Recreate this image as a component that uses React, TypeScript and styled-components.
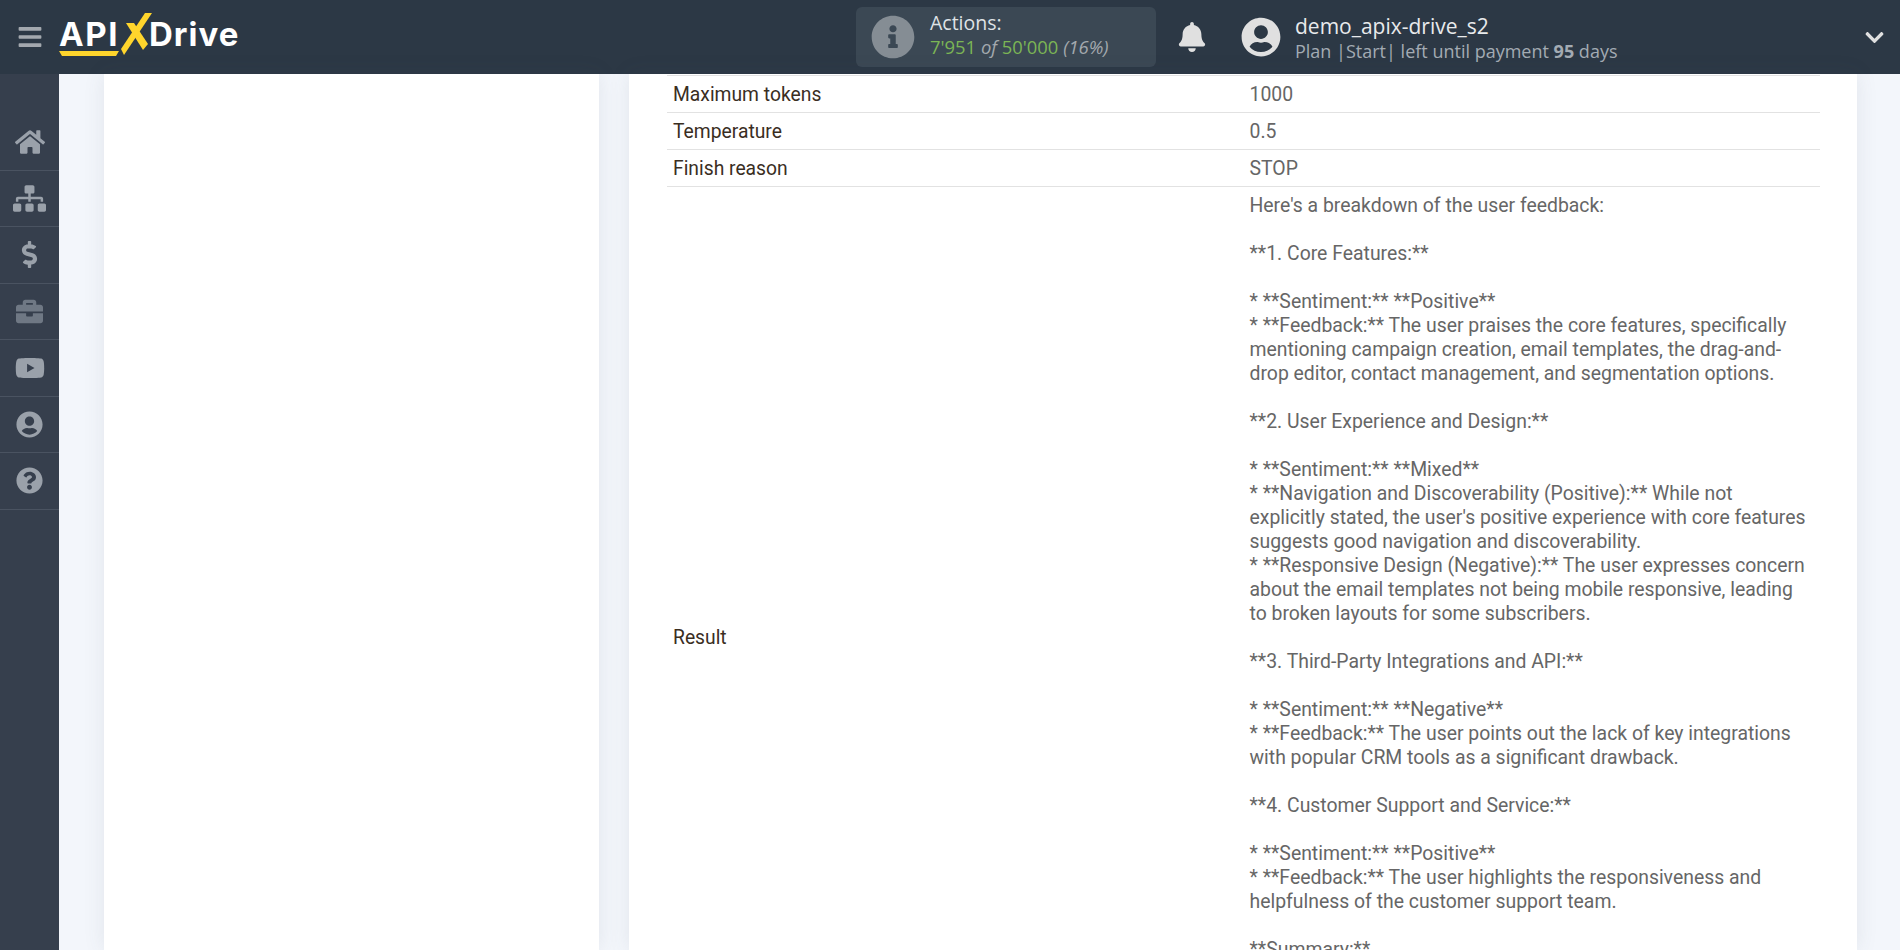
import React from "react";
import styled, { createGlobalStyle } from "styled-components";
import {
  FaBars,
  FaBell,
  FaBriefcase,
  FaChevronDown,
  FaDollarSign,
  FaHome,
  FaInfoCircle,
  FaQuestionCircle,
  FaSitemap,
  FaUserCircle,
  FaYoutube,
} from "react-icons/fa";

const GlobalStyle = createGlobalStyle`
  html, body {
    margin: 0;
    padding: 0;
    height: 950px;
    overflow: hidden;
    background: #f3f6fb;
    font-family: Roboto, "Liberation Sans", sans-serif;
  }
  * { box-sizing: border-box; }
`;

const resultText = `Here's a breakdown of the user feedback:

**1. Core Features:**

* **Sentiment:** **Positive**
* **Feedback:** The user praises the core features, specifically mentioning campaign creation, email templates, the drag-and-drop editor, contact management, and segmentation options.

**2. User Experience and Design:**

* **Sentiment:** **Mixed**
* **Navigation and Discoverability (Positive):** While not explicitly stated, the user's positive experience with core features suggests good navigation and discoverability.
* **Responsive Design (Negative):** The user expresses concern about the email templates not being mobile responsive, leading to broken layouts for some subscribers.

**3. Third-Party Integrations and API:**

* **Sentiment:** **Negative**
* **Feedback:** The user points out the lack of key integrations with popular CRM tools as a significant drawback.

**4. Customer Support and Service:**

* **Sentiment:** **Positive**
* **Feedback:** The user highlights the responsiveness and helpfulness of the customer support team.

**Summary:**





`;

const params = [
  { name: "Maximum tokens", value: "1000" },
  { name: "Temperature", value: "0.5" },
  { name: "Finish reason", value: "STOP" },
];

const navItems = [
  { icon: <FaHome />, size: 30, dim: false },
  { icon: <FaSitemap />, size: 33, dim: false },
  { icon: <FaDollarSign />, size: 27, dim: false },
  { icon: <FaBriefcase />, size: 27, dim: true },
  { icon: <FaYoutube />, size: 30, dim: false },
  { icon: <FaUserCircle />, size: 27, dim: false },
  { icon: <FaQuestionCircle />, size: 27, dim: false },
];

const App = () => {
  return (
    <Page>
      <GlobalStyle />
      <Header>
        <BurgerButton>
          <FaBars />
        </BurgerButton>
        <Logo>
          <LogoApi>API</LogoApi>
          <LogoX viewBox="0 0 31 42">
            <path d="M5 10h8l14 21-5 6z" fill="#ffd52c" />
            <path d="M24 0h7L3 42 0 36z" fill="#ffd52c" />
          </LogoX>
          <LogoDrive>Drive</LogoDrive>
          <LogoUnderline viewBox="0 0 60 5">
            <path d="M0 0h60l-3 5H3z" fill="#ffd52c" />
          </LogoUnderline>
        </Logo>
        <ActionsBox>
          <InfoIcon>
            <FaInfoCircle />
          </InfoIcon>
          <ActionsText>
            <ActionsTitle>Actions:</ActionsTitle>
            <ActionsCount>
              <Green>7'951</Green> <Muted>of</Muted> <Green>50'000</Green> <Muted>(16%)</Muted>
            </ActionsCount>
          </ActionsText>
        </ActionsBox>
        <BellIcon>
          <FaBell />
        </BellIcon>
        <Avatar>
          <FaUserCircle />
        </Avatar>
        <UserInfo>
          <UserName>demo_apix-drive_s2</UserName>
          <PlanLine>
            Plan |Start| left until payment <b>95</b> days
          </PlanLine>
        </UserInfo>
        <ChevronIcon>
          <FaChevronDown />
        </ChevronIcon>
      </Header>
      <Body>
        <Sidebar>
          {navItems.map((item, i) => (
            <NavItem key={i} $dim={item.dim} $size={item.size}>
              {item.icon}
            </NavItem>
          ))}
        </Sidebar>
        <Content>
          <LeftCard />
          <MainCard>
            <Table>
              {params.map((p) => (
                <Row key={p.name}>
                  <Label>{p.name}</Label>
                  <Value>{p.value}</Value>
                </Row>
              ))}
              <Row>
                <Label>Result</Label>
                <Value>{resultText}</Value>
              </Row>
            </Table>
          </MainCard>
        </Content>
      </Body>
    </Page>
  );
};

export default App;

const Page = styled.div`
  width: 1900px;
  height: 950px;
  display: flex;
  flex-direction: column;
  overflow: hidden;
`;

const Header = styled.header`
  height: 74px;
  flex: none;
  display: flex;
  align-items: center;
  background: #2c3845;
  font-family: "Open Sans", sans-serif;
`;

const BurgerButton = styled.div`
  width: 59px;
  flex: none;
  display: flex;
  justify-content: center;
  color: #a3a8ae;
  font-size: 26px;
  line-height: 0;
`;

const Logo = styled.div`
  position: relative;
  width: 181px;
  height: 74px;
  flex: none;
  display: flex;
  align-items: center;
  color: #fff;
`;

const LogoApi = styled.span`
  width: 60px;
  margin: -5px 2px 0 0;
  font-family: Inter, sans-serif;
  font-size: 33px;
  font-weight: 700;
  letter-spacing: 1.6px;
  line-height: 1;
`;

const LogoDrive = styled.span`
  margin: -5px 0 0 -3px;
  font-family: Inter, sans-serif;
  font-size: 33px;
  font-weight: 700;
  letter-spacing: 1px;
  line-height: 1;
`;

const LogoX = styled.svg`
  width: 31px;
  height: 42px;
  flex: none;
  margin-bottom: 6px;
`;

const LogoUnderline = styled.svg`
  position: absolute;
  left: 0;
  top: 51px;
  width: 60px;
  height: 5px;
`;

const ActionsBox = styled.div`
  width: 300px;
  height: 60px;
  flex: none;
  margin-left: 616px;
  padding-left: 15px;
  display: flex;
  align-items: center;
  gap: 15px;
  background: #3b4854;
  border-radius: 6px;
`;

const InfoIcon = styled.div`
  color: #858d94;
  font-size: 44px;
  line-height: 0;
`;

const ActionsText = styled.div`
  display: flex;
  flex-direction: column;
  margin-bottom: 6px;
`;

const ActionsTitle = styled.span`
  color: #dfe3e6;
  font-size: 19.5px;
  line-height: 25px;
`;

const ActionsCount = styled.span`
  font-size: 18.4px;
  line-height: 24px;
`;

const Green = styled.span`
  color: #7bb555;
`;

const Muted = styled.i`
  color: #a3a9ae;
`;

const BellIcon = styled.div`
  margin-left: 21px;
  color: #e0e0e0;
  font-size: 30px;
  line-height: 0;
`;

const Avatar = styled.div`
  margin-left: 34px;
  color: #e0e0e0;
  font-size: 40px;
  line-height: 0;
`;

const UserInfo = styled.div`
  margin: 2px 0 0 14px;
  display: flex;
  flex-direction: column;
`;

const UserName = styled.span`
  color: #e8eaec;
  font-size: 21px;
  line-height: 26px;
`;

const PlanLine = styled.span`
  color: #a3abb3;
  font-size: 18px;
  line-height: 24px;
`;

const ChevronIcon = styled.div`
  margin-left: auto;
  margin-right: 15px;
  color: #e0e0e0;
  font-size: 21px;
  line-height: 0;
`;

const Body = styled.div`
  flex: 1;
  min-height: 0;
  display: flex;
`;

const Sidebar = styled.nav`
  width: 59px;
  flex: none;
  padding-top: 40px;
  background: #363f4d;
`;

const NavItem = styled.div<{ $dim: boolean; $size: number }>`
  height: 56.5px;
  display: flex;
  align-items: center;
  justify-content: center;
  color: ${(p) => (p.$dim ? "#6f7884" : "#9aa1aa")};
  font-size: ${(p) => p.$size}px;
  border-bottom: 1px solid #4a5361;
`;

const Content = styled.main`
  flex: 1;
  min-width: 0;
  padding: 0 43px 0 45px;
  display: flex;
  gap: 30px;
`;

const LeftCard = styled.div`
  width: 495px;
  flex: none;
  background: #fff;
  box-shadow: 0 0 20px rgba(70, 80, 100, 0.1);
`;

const MainCard = styled.section`
  flex: 1;
  padding: 1px 37px 0 38px;
  background: #fff;
  box-shadow: 0 0 20px rgba(70, 80, 100, 0.1);
`;

const Table = styled.div`
  display: flex;
  flex-direction: column;
  border-top: 1px solid #e2e2e2;
`;

const Row = styled.div`
  display: grid;
  grid-template-columns: 50% 50%;
  border-bottom: 1px solid #e2e2e2;
`;

const Label = styled.div`
  padding: 7px 6px 5px;
  align-self: center;
  color: #3a2e1f;
  font-size: 19.3px;
  line-height: 24px;
`;

const Value = styled.div`
  padding: 7px 11px 5px 6px;
  color: #666;
  font-size: 19.4px;
  line-height: 24px;
  white-space: pre-wrap;
`;
